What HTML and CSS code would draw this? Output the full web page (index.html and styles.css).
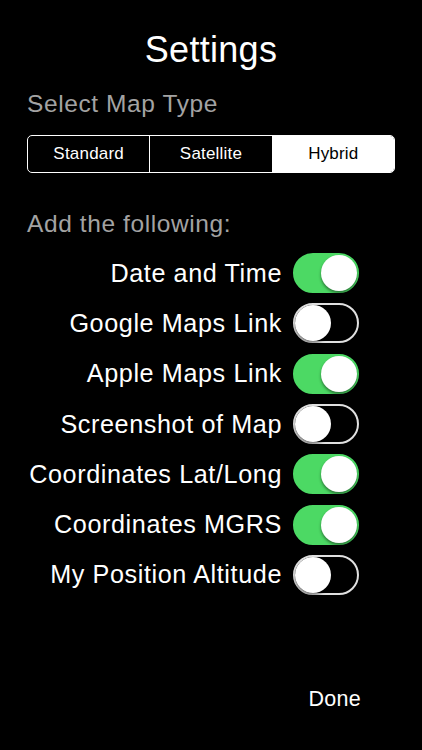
FILE: index.html
```html
<!DOCTYPE html>
<html lang="en">
<head>
  <meta charset="UTF-8">
  <title>Settings</title>
  <link rel="stylesheet" href="styles.css">
</head>
<body>

  <!-- Settings screen -->
  <main class="settings">
    <h1 class="title">Settings</h1>

    <h2 class="section-label">Select Map Type</h2>
    <div class="segmented">
      <span class="segment">Standard</span>
      <span class="segment">Satellite</span>
      <span class="segment selected">Hybrid</span>
    </div>

    <h2 class="section-label add-label">Add the following:</h2>
    <ul class="options">
      <li class="option"><span>Date and Time</span><span class="switch on"></span></li>
      <li class="option"><span>Google Maps Link</span><span class="switch"></span></li>
      <li class="option"><span>Apple Maps Link</span><span class="switch on"></span></li>
      <li class="option"><span>Screenshot of Map</span><span class="switch"></span></li>
      <li class="option"><span>Coordinates Lat/Long</span><span class="switch on"></span></li>
      <li class="option"><span>Coordinates MGRS</span><span class="switch on"></span></li>
      <li class="option"><span>My Position Altitude</span><span class="switch"></span></li>
    </ul>

    <div class="footer">
      <span class="done">Done</span>
    </div>
  </main>

</body>
</html>
```
FILE: styles.css
```css
body {
  margin: 0;
  padding: 0;
  background: #000;
  color: #fff;
  font-family: "Liberation Sans", Arial, sans-serif;
}

.settings {
  width: 422px;
  height: 750px;
  display: flex;
  flex-direction: column;
  box-sizing: border-box;
  padding: 0 27px;
}

.title {
  margin: 30px 0 0;
  font-size: 36px;
  font-weight: normal;
  text-align: center;
  line-height: 40px;
  letter-spacing: 0.3px;
}

.section-label {
  margin: 19px 0 0;
  font-size: 24.5px;
  font-weight: normal;
  color: #a3a3a3;
  line-height: 30px;
  letter-spacing: 0.6px;
}

.segmented {
  display: flex;
  margin-top: 16px;
  height: 38px;
  border: 1px solid #fff;
  border-radius: 5px;
  overflow: hidden;
  box-sizing: border-box;
}

.segment {
  flex: 1;
  display: flex;
  align-items: center;
  justify-content: center;
  font-size: 17px;
  letter-spacing: 0.2px;
  border-left: 1px solid #fff;
}

.segment:first-child {
  border-left: none;
}

.segment.selected {
  background: #fff;
  color: #000;
}

.add-label {
  margin-top: 36px;
}

.options {
  list-style: none;
  margin: 9px 0 0;
  padding: 0;
}

.option {
  display: flex;
  align-items: center;
  justify-content: flex-end;
  gap: 11px;
  height: 50.3px;
  padding-right: 36px;
  font-size: 25.2px;
  letter-spacing: 0.6px;
}

.switch {
  position: relative;
  width: 66px;
  height: 40px;
  box-sizing: border-box;
  border: 2px solid #e0e0e0;
  border-radius: 20px;
  background: #000;
  flex-shrink: 0;
}

.switch::after {
  content: "";
  position: absolute;
  top: 0;
  left: 0;
  width: 36px;
  height: 36px;
  border-radius: 50%;
  background: #fff;
  box-shadow: 0 2px 3px rgba(0, 0, 0, 0.45);
}

.switch.on {
  background: #4cd964;
  border-color: #4cd964;
}

.switch.on::after {
  left: 26px;
}

.footer {
  margin-top: auto;
  display: flex;
  justify-content: flex-end;
  padding: 0 34px 38px 0;
}

.done {
  font-size: 21.5px;
  letter-spacing: 0.3px;
}
```
